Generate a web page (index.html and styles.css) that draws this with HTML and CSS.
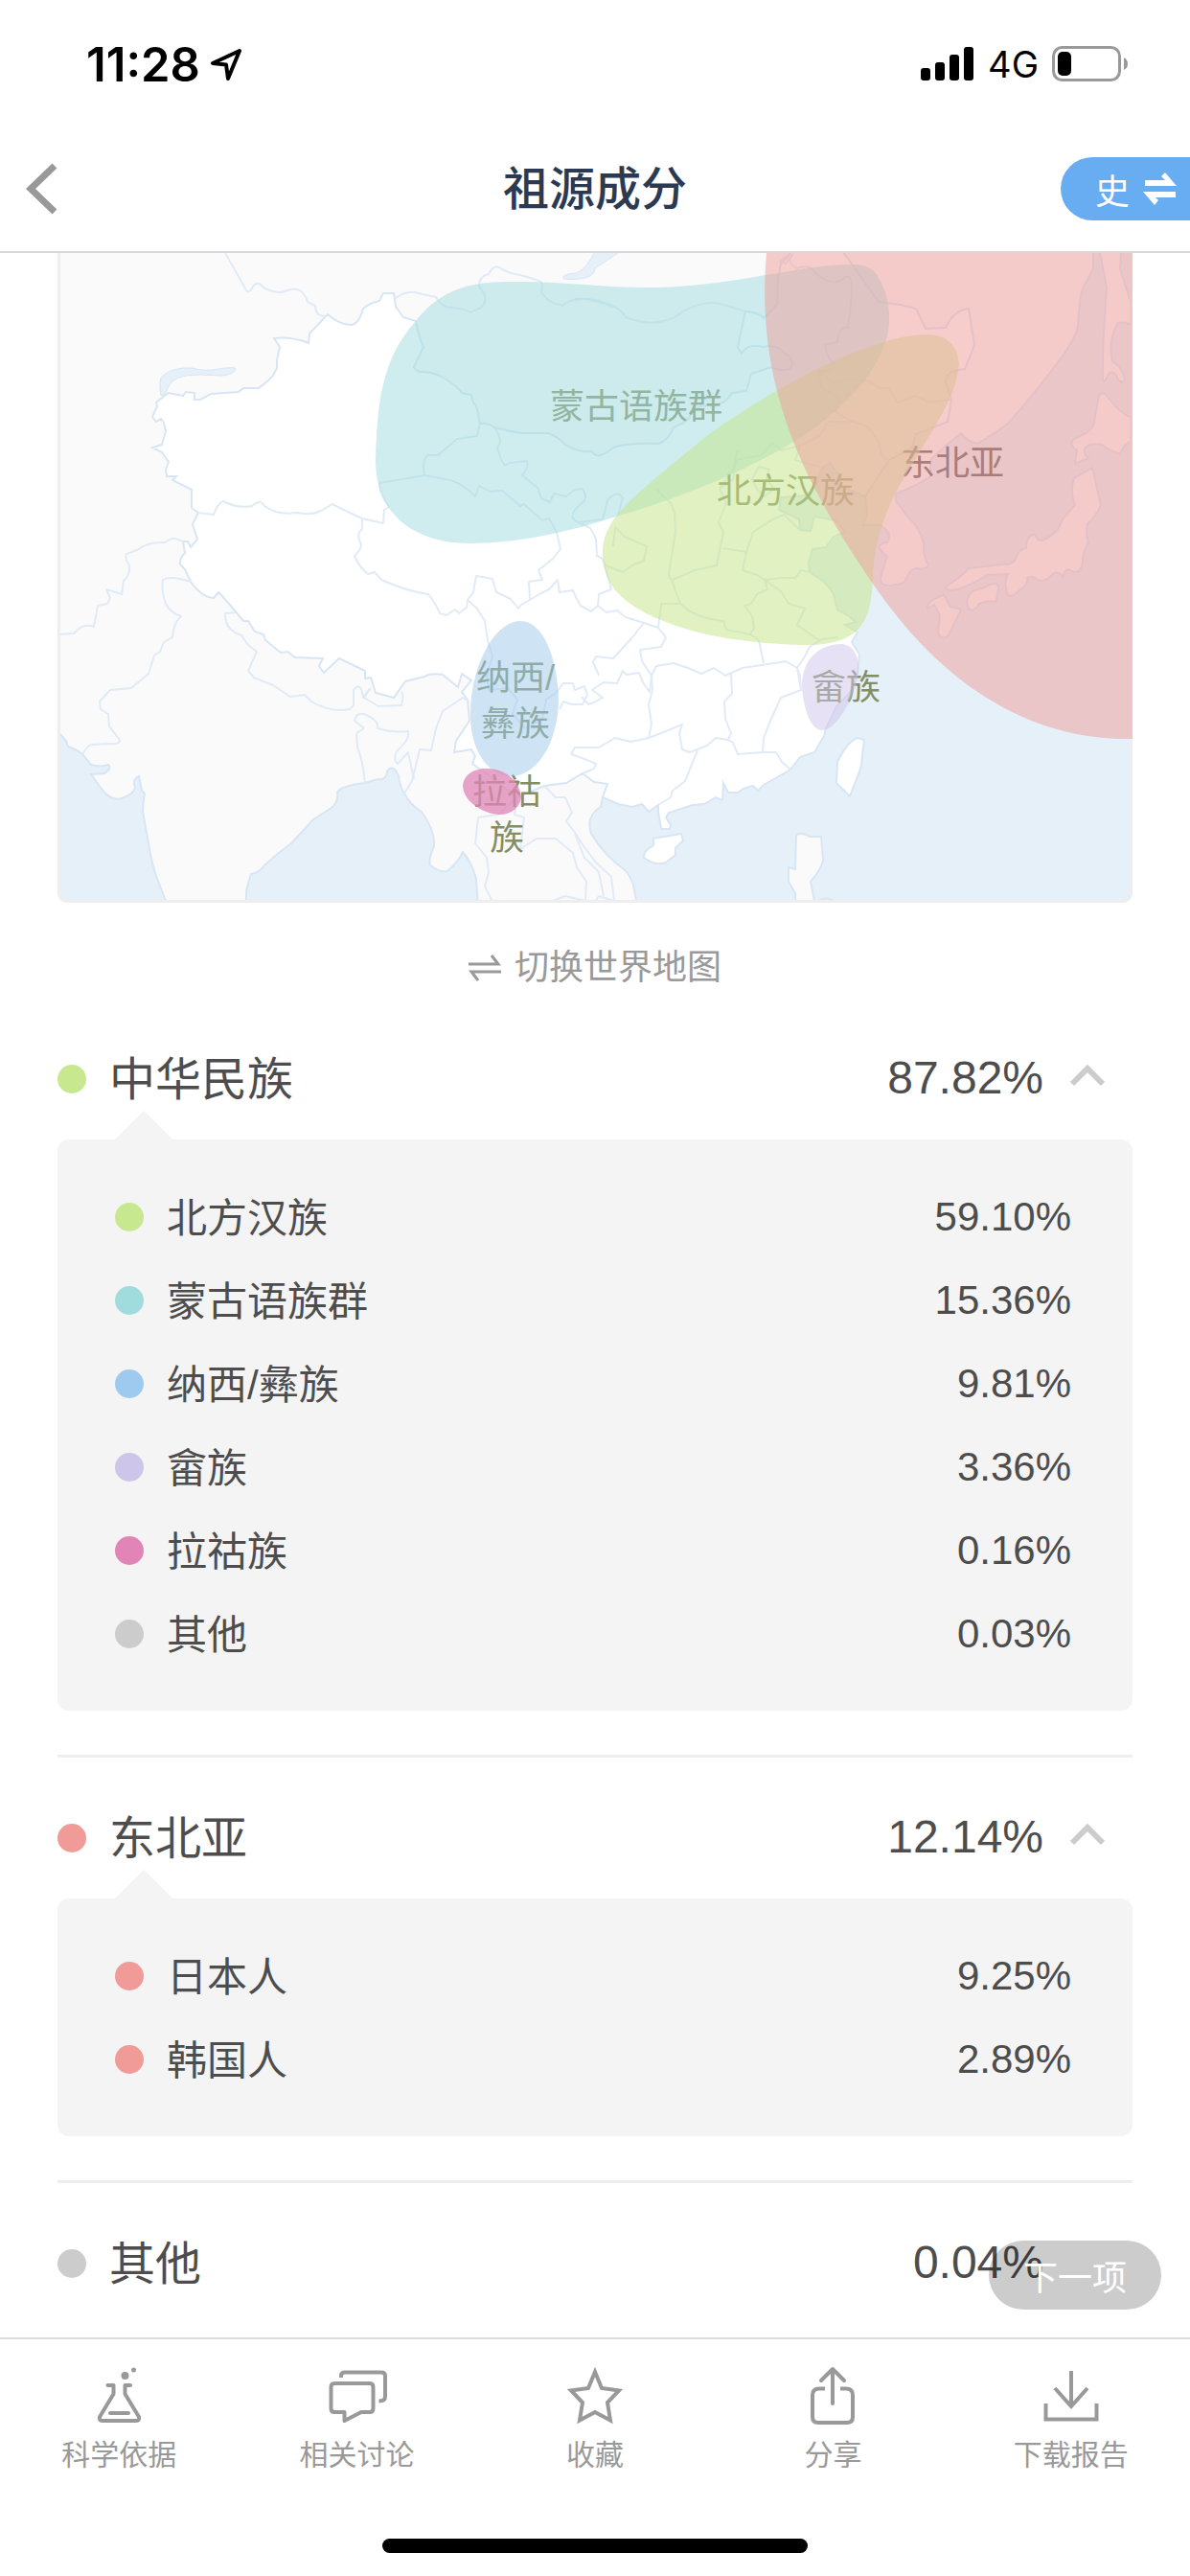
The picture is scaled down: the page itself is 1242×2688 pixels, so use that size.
FILE: index.html
```html
<!DOCTYPE html>
<html lang="zh-CN">
<head>
    <meta charset="UTF-8">
    <meta name="viewport" content="width=device-width, initial-scale=1.0">
    <title>祖源成分</title>
    <link rel="stylesheet" href="styles.css">
</head>
<body>
    <div class="status-bar">
        <div class="status-left">
            <span class="time">11:28</span>
            <svg width="34" height="34" viewBox="0 0 34 34" fill="none" stroke="#000" stroke-width="4" stroke-linejoin="round"><path d="M31 3 L3 16 L17 17.500 L19 32 Z"/></svg>
        </div>
        <div class="status-right">
            <svg width="56" height="36" viewBox="0 0 56 36"><rect x="0" y="22" width="10" height="13" rx="3"/><rect x="15" y="16" width="10" height="19" rx="3"/><rect x="30" y="8" width="10" height="27" rx="3"/><rect x="45" y="0" width="10" height="35" rx="3"/></svg>
            <span class="network">4G</span>
            <svg width="80" height="38" viewBox="0 0 80 38"><rect x="1.500" y="1.500" width="69" height="34" rx="9" fill="none" stroke="#999" stroke-width="3"/><rect x="6" y="6" width="14" height="25" rx="5"/><path d="M75 12 Q79 14 79 18.500 Q79 23 75 25 Z" fill="#999"/></svg>
        </div>
    </div>

    <header class="header">
        <button class="back-btn" aria-label="返回">
            <svg width="34" height="54" viewBox="0 0 34 54" fill="none" stroke="#999" stroke-width="7"><path d="M31 3 L6 27 L31 51"/></svg>
        </button>
        <h1>祖源成分</h1>
        <button class="history-btn">
            史
            <svg width="36" height="34" viewBox="0 0 36 34" fill="#fff"><path d="M2 8 H23 L19 4 L23 0 L35 14 H2 Z"/><path d="M34 26 H13 L16 29 L12 34 L0 20 H34 Z"/></svg>
        </button>
    </header>

    <main>
        <svg class="map" viewBox="60 264 1122 678" role="img" aria-label="祖源分布地图">
            <defs>
                <clipPath id="card"><path d="M60 264 H1182 V930 Q1182 942 1170 942 H72 Q60 942 60 930 Z"/></clipPath>
            </defs>
            <g clip-path="url(#card)">
                <rect x="60" y="264" width="1122" height="678" fill="#e5f0f9"/>

                <!-- land around China -->
                <g class="land">
                    <path d="M50 250 V760 L63 766 L69 773 L71 779 Q80 782 86 787 L95 798 Q105 801 113 798 Q117 802 109 807 L95 808 Q105 822 109 827 Q118 836 127 833 Q139 829 141 822 Q138 813 145 810 L148 825 L151 828 Q149 838 149 847 L155 880 Q158 900 164 917 L175 945 H257 V930 Q260 918 262 912 Q270 911 276 903 Q290 890 304 880 L327 855 L346 843 Q354 836 352 827 Q355 820 381 817 L394 813 Q403 815 404 805 Q410 796 416 810 Q417 820 422 828 Q428 840 440 847 Q454 866 453 883 Q447 896 449 903 Q460 911 467 909 Q478 900 483 889 Q492 899 497 917 L499 945 H665 L661 923 Q657 912 651 907 Q630 892 617 870 Q611 851 627 842 L629 832 L700 780 L840 690 L846 603 L844 587 L848 573 L870 560 L882 555 L872 543 L850 539 L846 554 L835 553 L834 542 L813 532 L815 519 L842 517 L858 488 Q865 479 872 488 L878 508 L903 518 L905 537 L901 548 L919 548 Q932 556 926 566 Q914 568 920 575 Q928 582 925 583 L919 603 Q918 611 928 611 Q941 610 944 607 Q951 592 956 593 Q967 595 969 589 Q963 580 964 567 Q960 550 948 540 L936 524 Q932 515 940 513 Q960 505 971 497 L971 480 Q983 468 1003 452 Q1013 464 1022 462 Q1045 448 1053 441 Q1080 410 1095 390 Q1123 355 1125 340 Q1127 300 1134 294 L1141 280 V250 Z"/>
                    <path d="M1151 250 L1148 263 L1155 300 Q1150 370 1151 397 Q1153 400 1157 390 Q1163 385 1167 396 Q1172 401 1174 396 Q1173 385 1161 377 Q1156 355 1167 337 Q1172 335 1185 340 V320 L1179 312 L1169 280 L1171 250 Z"/>
                    <path d="M1147 412 Q1153 408 1156 414 Q1170 433 1185 438 V458 Q1172 463 1169 474 Q1158 470 1150 464 Q1140 462 1134 466 Q1128 470 1136 478 L1122 484 L1124 470 Q1113 462 1123 457 Q1141 450 1142 440 Z"/>
                    <path d="M1140 488 L1149 527 Q1143 540 1135 547 Q1133 558 1136 566 Q1131 575 1130 583 Q1130 597 1121 597 Q1112 590 1109 602 Q1104 595 1099 599 Q1092 607 1085 606 Q1078 600 1072 603 Q1074 610 1064 616 Q1054 626 1051 619 Q1048 605 1052 599 L1030 600 Q1010 613 995 616 Q983 616 990 610 Q1003 602 1011 593 L1045 589 Q1060 590 1062 578 Q1067 572 1071 572 Q1071 558 1080 558 Q1083 566 1090 563 Q1106 555 1108 543 L1122 527 Q1116 512 1121 499 Z"/>
                    <path d="M1027 613 Q1042 605 1042 613 L1040 628 Q1030 626 1022 630 Q1016 640 1011 635 Q1006 625 1015 617 Z"/>
                    <path d="M985 621 L992 633 L1003 636 L997 649 L990 663 Q982 669 979 660 L981 642 L975 631 L968 635 Q967 627 985 621 Z"/>
                    <path d="M831 871 Q838 868 845 873 L857 873 L859 897 Q858 906 846 920 L851 945 H830 V932 L823 920 V905 L830 907 Z"/>
                    <path d="M852 942 Q862 933 873 942 Z"/>
                </g>

                <!-- China -->
                <g class="china">
                    <path d="M411 306 L413 320 L421 331 L434 335 Q437 352 442 362 L432 383 Q435 389 443 388 Q456 390 461 393 Q478 403 482 410 L492 412 Q493 422 497 423 L501 442 Q510 441 516 446 Q530 450 545 452 L572 452 Q583 456 590 464 Q605 473 618 471 Q623 481 640 467 Q655 462 688 463 Q699 458 703 446 Q715 441 719 437 Q724 422 741 423 Q757 423 764 410 L779 408 L784 390 L805 383 Q825 391 827 380 Q826 371 819 369 Q810 358 797 362 Q784 359 778 364 L774 369 L770 362 L778 325 Q792 326 797 332 L811 318 L812 292 L815 275 L822 268 L828 260 H878 L917 315 L940 318 L956 322 L966 343 L987 342 Q995 324 1011 322 L1017 360 L1007 385 Q985 387 987 400 L993 417 L989 440 L956 453 L952 467 L928 480 L903 518 L878 508 L874 493 L866 483 L858 488 L853 504 L842 517 L815 519 L813 532 L834 542 L835 553 L846 554 L850 539 L872 543 L882 555 L870 560 L862 571 L848 573 L844 587 L845 597 L860 607 Q866 613 870 620 L874 636 L886 643 L893 649 L882 652 L895 660 L889 670 L897 683 L895 703 L887 723 L873 737 L862 760 L860 768 L850 785 L835 790 L825 803 L813 810 L797 819 L791 825 L786 820 L776 823 L770 827 L760 827 L755 817 L754 835 L747 832 L735 839 L723 840 L698 848 L695 853 L700 861 L699 865 H690 L687 847 V840 L677 847 L670 839 L660 842 L645 839 L629 832 L634 818 L620 816 L608 807 L591 817 L568 820 L540 832 L507 807 L493 797 L496 789 L492 782 L474 785 L476 773 L490 752 L488 730 L482 722 L492 710 L482 703 L478 717 L462 704 Q450 702 443 706 L423 711 L411 728 L392 723 L387 707 L381 708 V700 L354 687 L338 702 L333 695 L337 687 L308 686 L300 680 L293 681 L277 668 L275 662 L266 659 L259 648 H254 L245 637 L232 622 L228 618 L223 624 Q210 623 199 607 L193 594 L188 589 Q187 583 193 577 L191 565 L196 565 L199 571 L206 563 L201 547 L207 535 L200 530 V511 L180 501 L184 497 L174 497 L173 490 L176 482 L169 472 L159 467 L169 464 L173 450 Q171 439 168 437 L163 440 L159 435 L164 424 L163 420 L176 410 L191 413 L194 409 L203 410 V417 L209 417 L220 411 L249 409 L254 405 H270 L280 397 L285 392 L289 384 V376 L292 362 L286 353 Q305 351 322 358 L323 348 L342 328 Q355 339 365 339 Q374 340 379 322 Q386 316 396 314 L400 306 Z"/>
                    <path d="M895 770 L902 772 L900 787 Q900 800 895 810 L887 831 L873 817 L874 795 Q885 773 895 770 Z"/>
                    <path d="M682 875 L711 870 L713 877 L705 885 V892 L695 900 Q685 904 672 895 Q671 888 682 882 Z"/>
                </g>

                <!-- lakes -->
                <g class="lake">
                    <path d="M168 413 Q165 395 170 392 Q180 383 200 384 Q215 388 228 385 Q246 382 246 385 Q244 391 231 392 L208 391 Q181 391 176 403 L172 412 Z"/>
                    <path d="M622 260 Q612 282 601 285 Q586 286 588 291 Q605 293 616 288 Q621 285 621 280 L645 264 V260 Z"/>
                    <path d="M764 321 L776 324 L768 322 Z"/>
                </g>

                <!-- country and province borders -->
                <g class="borders">
                    <path d="M235 264 Q250 290 257 303 Q260 307 264 299 Q269 292 275 300 Q290 308 300 303 Q315 297 321 315 L329 319 Q329 330 340 330"/>
                    <path d="M413 311 Q425 302 437 306 L455 310 Q462 322 473 321 Q484 322 491 326 L502 321 Q512 312 500 299 Q500 288 510 286 Q516 274 524 281 L533 285 Q550 288 562 293 Q568 294 565 305 Q573 317 587 319 Q595 311 612 312 Q630 316 640 320"/>
                    <path d="M600 312 Q620 311 630 316 Q646 319 653 331 Q680 342 704 331 Q730 312 752 317 L778 325"/>
                    <path d="M821 267 L814 273 L820 275 L828 265"/>
                    <path d="M828 265 Q819 273 832 280 Q846 275 851 285 Q870 300 878 292 Q891 280 889 307 Q888 324 885 342 Q875 340 874 357 L861 360 Q862 372 872 382 Q863 390 854 387"/>
                    <path d="M207 535 L223 537 Q227 525 233 523 Q248 531 263 528 Q272 520 276 528 Q290 538 310 535 Q325 538 335 533 L347 526 Q362 534 378 541 L400 546 L401 532 L406 529 Q396 516 396 504 L420 500 L443 496 Q440 478 447 475 L457 475 L477 458 L498 455 L501 442"/>
                    <path d="M378 541 V552 Q371 558 377 568 Q377 574 370 580 Q375 592 384 599 L391 597 L398 605 Q425 617 447 620 Q455 630 459 640 L466 642 L475 636 L479 640 L487 634 L488 626 L494 618 L497 601 L514 604 L518 618 L533 625 L541 635 L544 631 L553 626 L552 607 L566 605 L562 595 L577 583 L585 573 L581 555 L573 541 L566 543 L547 526 L543 528 L524 512 L512 513 L500 507 L496 518 Q482 503 465 500 L443 496"/>
                    <path d="M516 446 Q526 460 519 467 L523 480 L527 486 L532 483 L550 481 Q552 488 545 496 L561 509 L565 520 L574 524 L578 515 L591 518 L600 511 L608 510 Q615 520 606 526 Q590 540 604 545 L616 551 L622 562 L623 580 L629 583"/>
                    <path d="M604 545 L629 542 L634 522 Q645 510 650 520 L645 537"/>
                    <path d="M488 626 L498 635 L506 648 L509 668 L514 685 L508 705 L510 720 L530 718 L540 730 L535 745 L548 760 L566 750 L570 730 L580 723 L588 713 L598 713 L600 720 L610 716 L613 725 L608 735 L597 735 L588 732 L584 740"/>
                    <path d="M553 626 L563 620 L573 615 L582 605 L584 618 L598 616 L602 625 L606 632 L617 638 L624 632 L633 639 L644 637 L653 644 L672 650 L687 655 L695 665 L690 675 L668 678 L670 690 L680 705 L678 722 L671 712 L667 702 L654 704 L650 700 L644 713 L630 712 L618 720 L629 728 L620 733 L614 735 L607 727"/>
                    <path d="M672 650 L660 665 L640 687 L622 685 L619 691 L625 705"/>
                    <path d="M680 705 L685 695 L703 692 L718 697 L732 703 L745 697 L757 705 L763 702 L764 724 L756 732 L757 750 L763 765 L760 772 L747 770 L738 778 L730 781 L720 785 L712 782 L709 765 L712 756 L690 765 L677 770 L680 755 L677 735 L681 720 Z"/>
                    <path d="M677 770 L658 774 L642 770 L625 780 L600 780 L596 787 L610 792 L622 797 L620 802 L608 807"/>
                    <path d="M728 783 L715 815 L702 825 L700 832 L687 840"/>
                    <path d="M757 705 L775 697 L795 694 L808 692 L820 690 L832 697 L836 720 L815 728 L805 750 L797 770 L796 785 L770 787 L765 775 L760 772"/>
                    <path d="M796 785 L810 785 L816 795 L825 803"/>
                    <path d="M836 720 L835 705 L832 697 L840 685 L845 675 L858 667 L875 665"/>
                    <path d="M687 655 L690 630 L710 630 Q725 645 755 648 L758 657 L783 662 L792 668 L797 692"/>
                    <path d="M710 630 L702 608 L698 600 L705 555 L704 535 L700 525 L685 510"/>
                    <path d="M702 605 L725 595 L748 590 L752 570 L755 555 L750 545 L758 525 L751 510 L765 490 L770 470"/>
                    <path d="M755 572 L779 576 L786 555 L805 543 L818 537 L835 553"/>
                    <path d="M779 576 L775 595 L790 600 L798 605 L815 603 L830 603 L836 595 L845 597"/>
                    <path d="M798 605 L801 615 L790 620 L784 630 L777 632 L785 643 L787 655 L783 662"/>
                    <path d="M798 605 L815 617 L823 630 L840 635 L832 652 L850 665 L855 668"/>
                    <path d="M751 510 L765 500 L768 480 L795 475 L806 462 L815 470 L835 465 L830 480 L858 488"/>
                    <path d="M785 500 L792 487 L803 490 L800 500 L808 510 L798 518 L790 510 Z"/>
                    <path d="M835 465 L855 455 L865 440 L890 440 L905 445 L917 460 L920 475 L926 480"/>
                    <path d="M854 387 L870 400 L890 395 L905 397 L918 405 L928 405 L937 420 L955 413 L970 420 L992 417"/>
                    <path d="M854 387 L858 405 L876 415 L872 430 L890 440"/>
                    <path d="M640 570 L642 550 L652 560 L675 570 L672 585 L660 590 L650 597 L632 590 L629 583"/>
                    <path d="M629 583 L634 600 L638 615 L625 620 L624 632"/>
                    <path d="M191 565 L183 562 L179 562 L172 566 Q155 565 143 574 L132 578 Q130 583 135 590 Q136 600 129 606 L127 620 L111 615 L115 624 L112 630 L102 632 L98 654 Q88 650 80 658 L77 661 L60 662"/>
                    <path d="M199 607 Q178 600 170 605 Q168 615 173 630 Q178 640 189 643 Q181 650 180 665 L171 670 L167 680 L161 684 L155 703 L137 718 L115 720 L104 732 L105 740 L113 745 L114 758 L125 772 Q125 777 116 776 L95 777 Q90 780 86 787"/>
                    <path d="M246 639 L235 640 Q234 653 245 660 L252 663 L258 672 L268 680 L259 700 L265 707 L285 715 L303 727 L318 725 L325 732 Q345 744 365 740 L369 736 V720 Q377 710 379 728 L386 718"/>
                    <path d="M387 718 L380 728 L395 737 L419 736 Q422 725 419 722"/>
                    <path d="M381 817 Q378 790 373 780 L372 765 L380 760 L370 752 Q372 742 382 746 Q396 752 394 760 Q410 765 426 763 Q428 772 414 784 Q410 793 415 797 L426 785 L432 813"/>
                    <path d="M422 828 L430 815 L438 782 L450 783 L455 760 L462 742 L483 728 L490 732"/>
                    <path d="M540 832 L520 850 L499 853 L496 880 L508 895 L510 910 L506 925 L514 941"/>
                    <path d="M540 832 L537 850 L547 853 L543 886 L560 875 L580 875 L598 890 L602 905 L612 920 L611 940 L590 935 L572 942"/>
                    <path d="M568 820 L580 832 L590 832 L597 848 L591 857 L601 870 L607 880 L622 900 L638 915 L641 940 L625 935 L620 942"/>
                    <path d="M600 870 L610 895 L625 910 L630 935"/>
                </g>

                <path d="M61 264 V930 Q61 941 72 941 H1170 Q1181 941 1181 930 V264" fill="none" stroke="#eee" stroke-width="4"/>

                <g class="map-labels">
                    <text x="664" y="437">蒙古语族群</text>
                    <text x="820" y="525">北方汉族</text>
                    <text class="dark" x="994" y="496">东北亚</text>
                    <text x="883" y="730">畲族</text>
                    <text x="538" y="720">纳西/</text>
                    <text x="538" y="768">彝族</text>
                    <text x="529" y="839">拉祜</text>
                    <text x="529" y="887">族</text>
                </g>

                <!-- population areas -->
                <path fill="#9fdcdd" fill-opacity=".5" d="M537 294 C600 294 630 301 690 300 C770 297 840 276 885 276 C905 276 911 279 917 290 C931 313 932 345 919 370 C898 415 850 449 815 469 C760 499 700 523 640 540 C590 556 540 567 488 567 C430 566 392 535 392 480 C394 420 398 375 434 335 C463 297 500 294 537 294 Z"/>
                <path fill="#c6e58c" fill-opacity=".53" d="M968 349 C988 349 1000 361 1001 380 C998 415 975 445 952 485 C922 530 912 570 911 603 C909 650 898 674 837 673 C780 672 720 663 674 640 C641 622 629 604 629 575 C631 540 655 523 735 457 C790 416 870 372 919 358 C940 351 955 349 968 349 Z"/>
                <path fill="#f09b99" fill-opacity=".5" d="M800 264 C788 400 836 500 911 609 C980 710 1070 773 1182 771 V264 Z"/>
                <path fill="#9ecaeb" fill-opacity=".5" d="M543 648 C570 648 583 695 583 732 C582 775 561 809 534 810 C507 810 491 779 491 747 C490 697 516 648 543 648 Z"/>
                <path fill="#cdc3ea" fill-opacity=".5" d="M878 672 C893 673 897 688 896 703 C892 728 873 762 858 762 C844 762 837 731 837 713 C838 688 855 672 878 672 Z"/>
                <path fill="#e085b6" fill-opacity=".75" d="M507 802 C525 801 543 814 544 832 C543 842 534 850 522 850 C507 850 484 838 483 820 C484 808 495 802 507 802 Z"/>
            </g>
        </svg>

        <button class="switch-map">
            <svg width="34" height="30" viewBox="0 0 34 30" fill="none" stroke="#999" stroke-width="3"><path d="M0 11 H31 L24 2"/><path d="M34 19 H3 L10 28"/></svg>
            切换世界地图
        </button>

        <section class="group">
            <button class="group-head">
                <i class="dot green"></i>
                <span class="name">中华民族</span>
                <span class="percent">87.82%</span>
                <svg class="arrow" width="38" height="24" viewBox="0 0 38 24"><path d="M3 21 L19 5 L35 21"/></svg>
            </button>
            <ul class="panel">
                <li><i class="dot green"></i><span class="name">北方汉族</span><span>59.10%</span></li>
                <li><i class="dot teal"></i><span class="name">蒙古语族群</span><span>15.36%</span></li>
                <li><i class="dot blue"></i><span class="name">纳西/彝族</span><span>9.81%</span></li>
                <li><i class="dot purple"></i><span class="name">畲族</span><span>3.36%</span></li>
                <li><i class="dot pink"></i><span class="name">拉祜族</span><span>0.16%</span></li>
                <li><i class="dot gray"></i><span class="name">其他</span><span>0.03%</span></li>
            </ul>
        </section>

        <section class="group">
            <button class="group-head">
                <i class="dot red"></i>
                <span class="name">东北亚</span>
                <span class="percent">12.14%</span>
                <svg class="arrow" width="38" height="24" viewBox="0 0 38 24"><path d="M3 21 L19 5 L35 21"/></svg>
            </button>
            <ul class="panel">
                <li><i class="dot red"></i><span class="name">日本人</span><span>9.25%</span></li>
                <li><i class="dot red"></i><span class="name">韩国人</span><span>2.89%</span></li>
            </ul>
        </section>

        <section class="group">
            <div class="group-head">
                <i class="dot gray"></i>
                <span class="name">其他</span>
                <span class="percent no-arrow">0.04%</span>
            </div>
        </section>

        <button class="next-btn">下一项</button>
    </main>

    <nav class="tab-bar">
        <a href="#science">
            <svg viewBox="0 0 64 64"><path d="M20.500 21 H26.500 V30 L12 54 Q11 58 15 58 H50 Q54 58 53 54 L38.500 30 V21 H44"/><path d="M23 50 H42"/><circle class="solid" cx="38.500" cy="11" r="4"/><circle class="solid" cx="47.500" cy="5" r="2.500"/></svg>
            科学依据
        </a>
        <a href="#discuss">
            <svg class="butt" viewBox="0 0 64 64"><path d="M8 19 H45 Q48.500 19 48.500 23 V45 Q48.500 49 45 49 H36 L18.500 58 V49 H8 Q4.500 49 4.500 45 V23 Q4.500 19 8 19 Z"/><path d="M15 13 V11 Q15 7.500 19 7.500 H57 Q61 7.500 61 11 V33 Q61 37.500 54.500 37.500"/></svg>
            相关讨论
        </a>
        <a href="#favorite">
            <svg class="butt miter" viewBox="0 0 64 64"><path d="M32 7 L39 24 L57 26.500 L45 39 L48 57.500 L32 49 L16 57.500 L19 39 L7 26.500 L25 24 Z"/></svg>
            收藏
        </a>
        <a href="#share">
            <svg viewBox="0 0 64 64"><path d="M32 40 V4 M20 16 L32 4 L44 16"/><path class="butt" d="M24 24.500 H18 Q11 24.500 11 31 V54 Q11 60 17 60 H47 Q53 60 53 54 V31 Q53 24.500 46 24.500 H40"/></svg>
            分享
        </a>
        <a href="#download">
            <svg class="butt miter" viewBox="0 0 64 64"><path d="M32 6 V42 M15 24 L32 43 L49 24"/><path d="M5.500 40 V56.500 H58.500 V40"/></svg>
            下载报告
        </a>
    </nav>
    <div class="home-indicator"></div>
</body>
</html>
```

FILE: styles.css
```css
:root {
    --text-color: #4d4d4d;
    --muted-color: #999;
    --line-color: #eee;
    --panel-color: #f4f4f4;
}

* {
    box-sizing: border-box;
}

body {
    margin: 0;
    min-height: 100vh;
    display: flex;
    flex-direction: column;
    background: #fff;
    color: var(--text-color);
    font-family: "Liberation Sans", "Noto Sans CJK SC", sans-serif;
}

button {
    padding: 0;
    border: none;
    background: none;
    color: inherit;
    font-family: inherit;
    cursor: pointer;
}

svg {
    display: block;
    flex-shrink: 0;
}

/* status bar */
.status-bar {
    display: flex;
    justify-content: space-between;
    align-items: center;
    height: 132px;
    padding: 2px 64px 0 90px;
    color: #000;
    font-family: Inter, sans-serif;
}

.status-left,
.status-right {
    display: flex;
    align-items: center;
}

.status-left {
    gap: 10px;
}

.status-right {
    gap: 14px;
}

.time {
    font-size: 49px;
    font-weight: 600;
}

.network {
    font-size: 38px;
}

/* header */
.header {
    display: grid;
    grid-template-columns: 1fr auto 1fr;
    align-items: center;
    height: 132px;
    border-bottom: 2px solid #d8d8d8;
}

.header h1 {
    margin: 0;
    padding-bottom: 8px;
    color: #2b3a52;
    font-size: 48px;
    font-weight: 500;
}

.back-btn {
    justify-self: start;
    padding: 10px 26px;
}

.history-btn {
    justify-self: end;
    display: flex;
    align-items: center;
    gap: 14px;
    height: 66px;
    padding: 0 13px 0 36px;
    border-radius: 33px 0 0 33px;
    background: #68acf1;
    color: #fff;
    font-size: 36px;
}

/* content */
main {
    position: relative;
    flex: 1;
    padding: 0 60px;
}

.map {
    width: 100%;
    height: auto;
}

.land {
    fill: #fafafa;
    stroke: #d8e6f4;
    stroke-width: 2;
}

.china {
    fill: #fff;
    stroke: #d8e6f4;
    stroke-width: 2;
}

.lake {
    fill: #e5f0f9;
    stroke: #d8e6f4;
}

.borders {
    fill: none;
    stroke: #e0ebf7;
    stroke-width: 2;
    stroke-linejoin: round;
}

.map-labels {
    fill: #838e63;
    font-size: 36px;
    text-anchor: middle;
}

.map-labels .dark {
    fill: #625e5c;
}

.switch-map {
    display: flex;
    align-items: center;
    justify-content: center;
    gap: 14px;
    margin: 42px auto 6px;
    color: var(--muted-color);
    font-size: 36px;
    line-height: 52px;
}

.group + .group {
    border-top: 3px solid var(--line-color);
}

.group-head {
    display: flex;
    align-items: center;
    width: 100%;
    height: 147px;
    padding: 21px 28px 0 0;
    font-size: 48px;
    text-align: left;
}

.dot {
    width: 30px;
    height: 30px;
    margin-right: 24px;
    border-radius: 50%;
}

.green { background: #c8e88f; }
.teal { background: #a0dcde; }
.blue { background: #9fcaef; }
.purple { background: #cdc5ea; }
.pink { background: #e085b6; }
.red { background: #f09b97; }
.gray { background: #ccc; }

.name {
    flex: 1;
    padding-bottom: 4px;
}

.group-head .name {
    padding-bottom: 8px;
}

.arrow {
    margin: 0 0 8px 27px;
    fill: none;
    stroke: #ccc;
    stroke-width: 6;
}

.percent {
    padding-bottom: 4px;
}

.percent.no-arrow {
    margin-right: 65px;
}

.panel {
    position: relative;
    margin: 0 0 46px;
    padding: 37px 64px 37px 60px;
    border-radius: 12px;
    background: var(--panel-color);
    font-size: 42px;
    list-style: none;
}

.panel::before {
    content: "";
    position: absolute;
    top: -30px;
    left: 60px;
    border: 30px solid transparent;
    border-top: none;
    border-bottom-color: var(--panel-color);
}

.panel li {
    display: flex;
    align-items: center;
    height: 87px;
}

.next-btn {
    position: absolute;
    right: 30px;
    bottom: 29px;
    width: 180px;
    height: 72px;
    border-radius: 36px;
    background: rgba(0, 0, 0, 0.2);
    color: #fff;
    font-size: 36px;
}

/* bottom tabs */
.tab-bar {
    display: flex;
    padding: 27px 0 65px;
    border-top: 2px solid #ddd;
}

.tab-bar a {
    flex: 1;
    display: flex;
    flex-direction: column;
    align-items: center;
    gap: 8px;
    color: var(--muted-color);
    font-size: 30px;
    line-height: 44px;
    text-decoration: none;
}

.tab-bar svg {
    width: 64px;
    height: 64px;
    fill: none;
    stroke: var(--muted-color);
    stroke-width: 4;
    stroke-linecap: round;
    stroke-linejoin: round;
}

.tab-bar .butt {
    stroke-linecap: butt;
}

.tab-bar .miter {
    stroke-linejoin: miter;
}

.tab-bar .solid {
    fill: var(--muted-color);
    stroke: none;
}

.home-indicator {
    width: 444px;
    height: 15px;
    margin: 0 auto 24px;
    border-radius: 8px;
    background: #000;
}
```
